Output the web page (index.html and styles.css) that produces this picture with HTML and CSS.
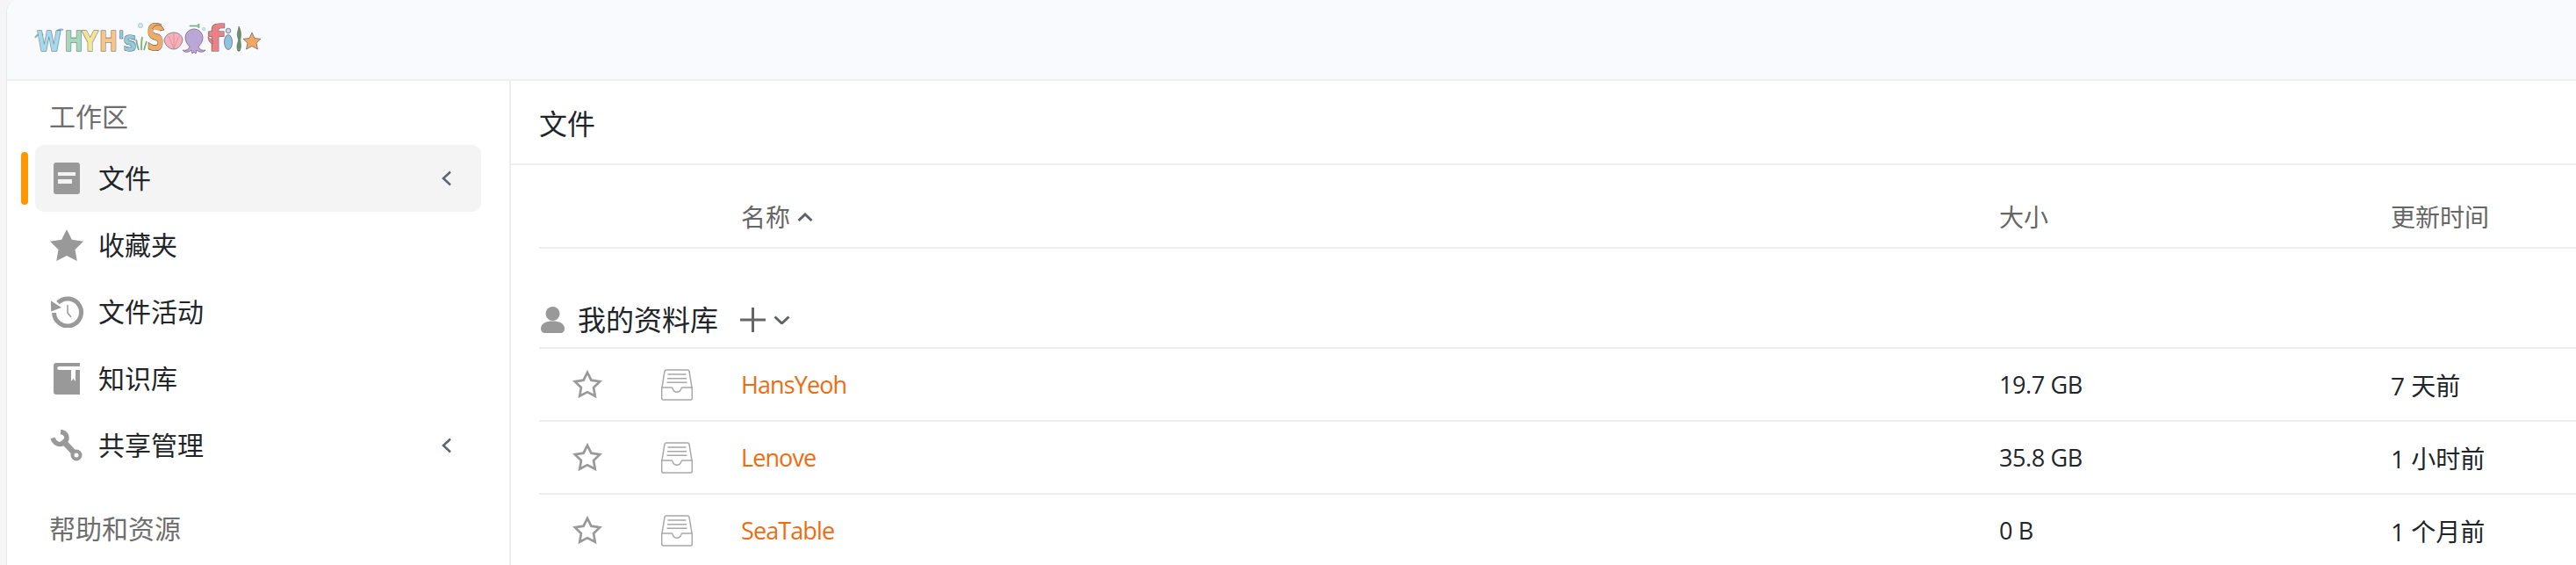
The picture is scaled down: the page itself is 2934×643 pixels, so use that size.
FILE: index.html
```html
<!DOCTYPE html>
<html lang="zh-CN">
<head>
<meta charset="utf-8">
<title>文件 - Seafile</title>
<link rel="stylesheet" href="styles.css">
</head>
<body>
<div class="app">
  <header class="topbar">
    <svg class="logo" viewBox="0 0 256 36" role="img" aria-label="WHYH's Seafile">
      <path d="M0 18c2-4 6-5 9-3M24 12c2-3 5-4 8-3" fill="none" stroke="#7fb9cf" stroke-width="2"/>
      <g class="logo-letters">
        <text transform="scale(.78 1)" x="2.600 43 68.500 93.600 121 129" y="33"><tspan fill="#a6d9ec">W</tspan><tspan fill="#a7d8bb">H</tspan><tspan fill="#f4e58f">Y</tspan><tspan fill="#f7c48a">H</tspan><tspan fill="#93c9dc">'s</tspan></text>
        <text x="127" y="32" textLength="20" lengthAdjust="spacingAndGlyphs" fill="#efaa63" class="logo-tall">S</text>
        <text x="197" y="33" textLength="18" lengthAdjust="spacingAndGlyphs" fill="#ec8083" class="logo-tall">f</text>
      </g>
      <circle cx="120" cy="4" r="2.600" fill="#cfe8ee" stroke="#8fbcc8" stroke-width=".6"/>
      <path d="M118 32c-2-5-2-9-3-12M121 32c0-6 0-10 1-15M124 32c1-4 2-7 3-10" fill="none" stroke="#7fae78" stroke-width="1.800"/>
      <path d="M133 8c3-5 9-6 12-2l2 3-5 1" fill="#efaa63" stroke="#6b5a48" stroke-width=".7"/>
      <g stroke="#6b5a6b" stroke-width=".7">
        <path d="M158 31c-6 0-11-6-11-11 2-6 7-8 11-8s9 2 10 8c0 5-5 11-10 11z" fill="#f3b3ba"/>
        <path d="M158 30l-6-14M158 30V13M158 30l6-14" fill="none" stroke="#dc8c98" stroke-width=".8"/>
        <path d="M168 32c4 1 7-1 8-4-3-3-5-6-5-10 0-6 5-10 10-10s10 4 10 10c0 4-2 7-5 10 1 3 4 5 8 4-2 3-7 3-10 0l-1 4-2-2-2 2-1-4c-3 3-8 3-10 0z" fill="#bba6d8"/>
        <ellipse cx="220" cy="23" rx="4.500" ry="8.500" fill="#8cc5dd"/>
        <circle cx="220" cy="10" r="2.800" fill="#b8dfee"/>
        <path d="M231 33c-3-8 2-10 0-15s1-9 1-13c2 4 3 8 2 13s2 9-1 15z" fill="#5d9b60"/>
        <path d="M247 12l3 6.500 7 .8-5 4.700 1.500 7-6.500-3.500-6.500 3.500 1.500-7-5-4.700 7-.8z" fill="#f1a95f"/>
      </g>
      <path d="M197 17l5 4v4c-3-1-5-4-5-8z" fill="#ec8083" stroke="#6b5a6b" stroke-width=".6"/>
      <path d="M176 4h8l3-2v5l-3-2h-8z" fill="#8cc9a4" stroke="#6b8a78" stroke-width=".5"/>
      <circle cx="192" cy="8" r="1.800" fill="#cfe8ee" stroke="#8fbcc8" stroke-width=".5"/>
    </svg>
  </header>
  <div class="workspace">
    <aside class="sidebar">
      <h2 class="section-title section-first">工作区</h2>
      <nav>
        <a class="nav-item nav-active">
          <span class="nav-icon">
            <svg class="i-file" viewBox="0 0 30 36"><rect width="30" height="36" rx="3" fill="#999"/><rect x="5" y="11" width="20" height="4" fill="#f4f4f4"/><rect x="5" y="19" width="16" height="5" fill="#f4f4f4"/></svg>
          </span>
          <span class="nav-label">文件</span>
          <svg class="chev-left" viewBox="0 0 11 18"><path d="M10 1.500 2 9l8 7.500"/></svg>
        </a>
        <a class="nav-item">
          <span class="nav-icon">
            <svg class="i-star" viewBox="2 2 20 19" preserveAspectRatio="none"><path d="M12 2l3.090 6.260L22 9.270l-5 4.870 1.180 6.880L12 17.770l-6.180 3.250L7 14.140 2 9.270l6.910-1.010z" fill="#999"/></svg>
          </span>
          <span class="nav-label">收藏夹</span>
        </a>
        <a class="nav-item">
          <span class="nav-icon">
            <svg class="i-star" viewBox="0 0 38 36"><path d="M9 7.500A15.500 15.500 0 1 1 4.500 19" fill="none" stroke="#999" stroke-width="5"/><path d="M0 6l2 12 11-6z" fill="#999" transform="rotate(8 6 12)"/><path d="M20 10v9l4 5" fill="none" stroke="#999" stroke-width="1.500"/></svg>
          </span>
          <span class="nav-label">文件活动</span>
        </a>
        <a class="nav-item">
          <span class="nav-icon">
            <svg class="i-file" viewBox="0 0 30 36"><path d="M3 0h27v4H6.500C3.500 4 3.500 8 6.500 8H20v13l2.500-3 2.500 3V8h5v28H3a3 3 0 0 1-3-3V3a3 3 0 0 1 3-3z" fill="#999"/></svg>
          </span>
          <span class="nav-label">知识库</span>
        </a>
        <a class="nav-item">
          <span class="nav-icon">
            <svg class="i-star" viewBox="0 0 38 36"><path d="M14 12l15 16" fill="none" stroke="#999" stroke-width="6.500"/><path d="M12 2.500c5 .5 8 4 6.500 9-1.500 4-6 6-10 4.500C6 15 4 12.500 3 9.500" fill="none" stroke="#999" stroke-width="5.500"/><circle cx="30" cy="29" r="4.500" fill="#fff" stroke="#999" stroke-width="4"/></svg>
          </span>
          <span class="nav-label">共享管理</span>
          <svg class="chev-left" viewBox="0 0 11 18"><path d="M10 1.500 2 9l8 7.500"/></svg>
        </a>
      </nav>
      <h2 class="section-title section-next">帮助和资源</h2>
    </aside>
    <main class="main">
      <div class="main-head">文件</div>
      <div class="table">
        <div class="row row-head">
          <span class="cell-name head-sort">名称<svg class="chev-up" viewBox="0 0 18 10"><path d="M1.500 9 9 2l7.500 7"/></svg></span>
          <span class="cell-size">大小</span>
          <span class="cell-time">更新时间</span>
        </div>
        <div class="group-row">
          <svg class="i-person" viewBox="0 0 27 30"><circle cx="13.500" cy="8" r="8" fill="#999"/><path d="M0 25c0-6 6-8.500 13.500-8.500S27 19 27 25c0 3-2 5-5 5H5c-3 0-5-2-5-5z" fill="#999"/></svg>
          <span class="group-label">我的资料库</span>
          <svg class="i-plus" viewBox="0 0 29 28"><path d="M14.500 0v28M0 14h29"/></svg>
          <svg class="chev-down" viewBox="0 0 19 10"><path d="M1.500 1.500 9.500 9l8-7.500"/></svg>
        </div>
        <div class="row row-lib">
          <svg class="i-outline-star" viewBox="0 0 24 24"><path d="M12 2l3.090 6.260L22 9.270l-5 4.870 1.180 6.880L12 17.770l-6.180 3.250L7 14.140 2 9.270l6.910-1.010z"/></svg>
          <svg class="i-inbox" viewBox="0 0 36 36"><path d="M1 21 4 2.500A2 2 0 0 1 6 1h24a2 2 0 0 1 2 1.500L35 21M.7 21v12.500a1.500 1.500 0 0 0 1.500 1.500h31.600a1.500 1.500 0 0 0 1.500-1.500V21H24c-.8 0-1 .8-1.300 1.800-.7 2-2.500 3.400-4.700 3.400s-4-1.400-4.700-3.400C13 21.800 12.800 21 12 21zM7.500 6h21M7 10.700h22M6.500 15.300h23"/></svg>
          <a class="lib-link">HansYeoh</a>
          <span class="cell-size lib-size">19.7 GB</span>
          <span class="cell-time">7 天前</span>
        </div>
        <div class="row row-lib">
          <svg class="i-outline-star" viewBox="0 0 24 24"><path d="M12 2l3.090 6.260L22 9.270l-5 4.870 1.180 6.880L12 17.770l-6.180 3.250L7 14.140 2 9.270l6.910-1.010z"/></svg>
          <svg class="i-inbox" viewBox="0 0 36 36"><path d="M1 21 4 2.500A2 2 0 0 1 6 1h24a2 2 0 0 1 2 1.500L35 21M.7 21v12.500a1.500 1.500 0 0 0 1.500 1.500h31.600a1.500 1.500 0 0 0 1.500-1.500V21H24c-.8 0-1 .8-1.300 1.800-.7 2-2.500 3.400-4.700 3.400s-4-1.400-4.700-3.400C13 21.800 12.800 21 12 21zM7.500 6h21M7 10.700h22M6.500 15.300h23"/></svg>
          <a class="lib-link">Lenove</a>
          <span class="cell-size lib-size">35.8 GB</span>
          <span class="cell-time">1 小时前</span>
        </div>
        <div class="row row-lib">
          <svg class="i-outline-star" viewBox="0 0 24 24"><path d="M12 2l3.090 6.260L22 9.270l-5 4.870 1.180 6.880L12 17.770l-6.180 3.250L7 14.140 2 9.270l6.910-1.010z"/></svg>
          <svg class="i-inbox" viewBox="0 0 36 36"><path d="M1 21 4 2.500A2 2 0 0 1 6 1h24a2 2 0 0 1 2 1.500L35 21M.7 21v12.500a1.500 1.500 0 0 0 1.500 1.500h31.600a1.500 1.500 0 0 0 1.500-1.500V21H24c-.8 0-1 .8-1.300 1.800-.7 2-2.500 3.400-4.700 3.400s-4-1.400-4.700-3.400C13 21.800 12.800 21 12 21zM7.500 6h21M7 10.700h22M6.500 15.300h23"/></svg>
          <a class="lib-link">SeaTable</a>
          <span class="cell-size lib-size">0 B</span>
          <span class="cell-time">1 个月前</span>
        </div>
      </div>
    </main>
  </div>
</div>
</body>
</html>
```
FILE: styles.css
```css
* { box-sizing: border-box; }
html, body { margin: 0; height: 100%; overflow: hidden; }
body {
  background: #f5f5f5;
  color: #212529;
  font-family: "Open Sans", "Noto Sans CJK SC", sans-serif;
  font-size: 28px;
}
.app {
  margin-left: 7px;
  height: 100vh;
  display: flex;
  flex-direction: column;
  background: #fff;
  border-left: 1px solid #e8e8e8;
  border-top-left-radius: 14px;
  overflow: hidden;
}
.topbar {
  flex: none;
  height: 92px;
  padding: 25px 0 0 32px;
  background: #f9fafe;
  border-bottom: 2px solid #eeeff2;
}
.logo { display: block; width: 256px; height: 36px; overflow: visible; }
.logo-letters text {
  font-family: "DejaVu Sans", sans-serif;
  font-weight: 700;
  font-size: 32px;
  stroke: #50606a;
  stroke-width: 1.2px;
  paint-order: stroke;
}
.logo-letters .logo-tall { font-size: 40px; }

.workspace { flex: 1; display: flex; min-height: 0; }
.sidebar {
  flex: none;
  width: 574px;
  border-right: 2px solid #eeeeee;
}
.section-title {
  margin: 0 0 0 48px;
  font-size: 30px;
  font-weight: 400;
  line-height: 36px;
  color: #6e6e6e;
}
.section-first { padding: 23px 0 14px; }
.section-next { padding-top: 39px; }
.nav-item {
  position: relative;
  display: flex;
  align-items: center;
  width: 508px;
  height: 76px;
  margin-left: 32px;
  padding: 0 34px 0 17px;
  border-radius: 10px;
  font-size: 30px;
  line-height: 36px;
  color: #212529;
}
.nav-active { background: #f4f4f4; }
.nav-active::before {
  content: "";
  position: absolute;
  left: -16px;
  top: 8px;
  width: 8px;
  height: 60px;
  border-radius: 4px;
  background: #ff9800;
}
.nav-icon {
  flex: none;
  width: 38px;
  display: flex;
  justify-content: center;
  margin-right: 17px;
}
.i-file { display: block; width: 30px; height: 36px; }
.i-star { display: block; width: 38px; height: 36px; }
.nav-label { flex: 1; }
.chev-left {
  flex: none;
  width: 11px;
  height: 18px;
  fill: none;
  stroke: #5c6673;
  stroke-width: 2.6;
}

.main { flex: 1; min-width: 0; }
.main-head {
  height: 96px;
  display: flex;
  align-items: center;
  padding-left: 32px;
  font-size: 32px;
  border-bottom: 2px solid #eeeeee;
}
.table { padding-left: 32px; }
.row {
  display: grid;
  grid-template-columns: 110px 120px 1433px 446px 1fr;
  align-items: center;
  border-bottom: 2px solid #eeeeee;
}
.row-head {
  margin-top: 41px;
  padding-bottom: 16px;
  line-height: 36px;
  color: #666;
}
.cell-name { grid-column: 3; }
.cell-size { grid-column: 4; }
.cell-time { grid-column: 5; }
.lib-size { font-size: 27px; letter-spacing: -.4px; }
.head-sort { display: flex; align-items: center; gap: 8px; }
.chev-up, .chev-down {
  flex: none;
  fill: none;
  stroke: #5f6368;
  stroke-width: 3;
}
.chev-up { width: 18px; height: 10px; }
.chev-down { width: 19px; height: 10px; margin-left: 9px; }
.group-row {
  display: flex;
  align-items: center;
  height: 114px;
  padding: 50px 0 0 2px;
  border-bottom: 2px solid #eeeeee;
}
.i-person { flex: none; width: 27px; height: 30px; margin-right: 15px; }
.group-label { width: 185px; font-size: 32px; color: #212529; line-height: 36px; }
.i-plus {
  flex: none;
  width: 29px;
  height: 28px;
  fill: none;
  stroke: #666;
  stroke-width: 3;
}
.row-lib { height: 83px; }
.i-outline-star {
  justify-self: center;
  width: 34px;
  height: 34px;
  fill: none;
  stroke: #999;
  stroke-width: 1.9;
}
.i-inbox {
  margin-left: 29px;
  width: 36px;
  height: 36px;
  fill: none;
  stroke: #a8a8a8;
  stroke-width: 1.5;
}
.lib-link { color: #ee6c0f; font-size: 27px; letter-spacing: -.9px; }
```
